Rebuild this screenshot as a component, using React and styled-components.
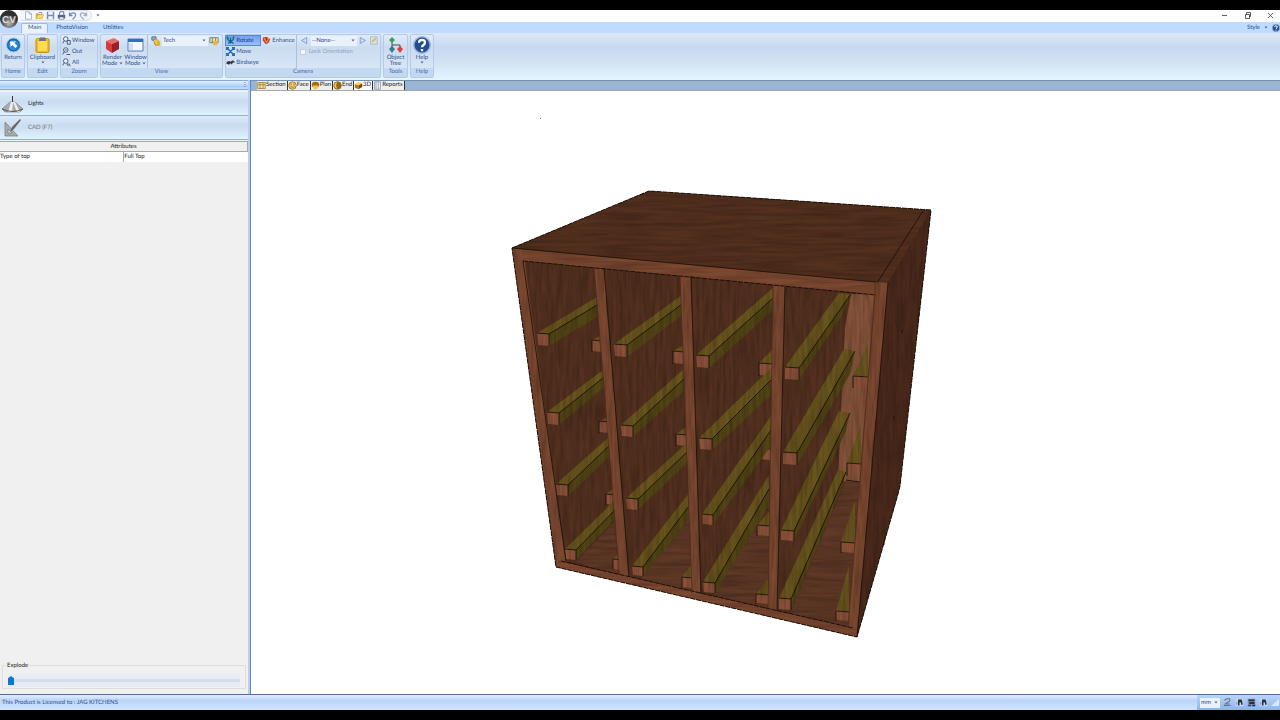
import React, { useState } from "react";
import styled, { createGlobalStyle, css } from "styled-components";

const GlobalStyle = createGlobalStyle`
  * {
    box-sizing: border-box;
  }

  body {
    margin: 0;
    background: #000;
    font-family: Lato, "Open Sans", sans-serif;
    font-size: 6px;
    line-height: 8px;
    color: #2f4f8b;
    text-rendering: geometricPrecision;
  }

  button, select, input {
    font: inherit;
    color: inherit;
    text-rendering: inherit;
  }
`;

const Page = styled.div`
  display: flex;
  flex-direction: column;
  min-height: 100vh;
  padding: 10px 0;
  overflow: hidden;
`;

const TitleBar = styled.header`
  position: relative;
  display: flex;
  align-items: flex-start;
  justify-content: space-between;
  height: 12px;
  padding-left: 20px;
  background: #fff;
`;

const Orb = styled.button`
  position: absolute;
  z-index: 1;
  top: 0;
  left: 0;
  width: 20px;
  height: 20px;
  padding: 0;
  border: 0;
  background: none;

  svg {
    display: block;
  }
`;

const QuickBar = styled.div`
  display: flex;
  align-items: center;
  gap: 1px;
  height: 11px;
  padding: 0 3px;
  border: 1px solid #d5dde9;
  border-left: 0;
  border-radius: 0 6px 6px 0;
  background: #f3f7fc;
`;

const QuickGroup = styled.div`
  display: flex;
  align-items: center;
  gap: 4px;
`;

const IconButton = styled.button`
  display: flex;
  align-items: center;
  justify-content: center;
  min-width: 10px;
  height: 10px;
  padding: 0;
  border: 0;
  background: none;
`;

const WindowButtons = styled.div`
  display: flex;
  gap: 13px;
  padding-right: 5px;
  color: #333;
`;

const TabBar = styled.nav`
  display: flex;
  align-items: flex-end;
  height: 11px;
  padding-left: 21px;
  background: #bfdbff;
`;

const RibbonTab = styled.button`
  height: 10px;
  margin-right: 1px;
  padding: 0 6px 1px;
  border: 1px solid transparent;
  border-bottom: 0;
  border-radius: 2px 2px 0 0;
  background: none;
  line-height: 8px;

  ${(props) =>
    props.$active &&
    css`
      border-color: #9bbbe3;
      background: #e8f1fc;
    `}
`;

const StyleMenu = styled.div`
  display: flex;
  align-items: center;
  gap: 4px;
  height: 11px;
  margin-left: auto;
`;

const Ribbon = styled.div`
  display: flex;
  gap: 2px;
  height: 47px;
  padding: 1px 1px 2px;
  background: linear-gradient(#dce8f8 0, #c8d9ef 14px, #d3e3f4 30px, #e3f5ff 100%);
`;

const Group = styled.section`
  display: flex;
  flex-direction: column;
  width: ${(props) => props.$width}px;
  border: 1px solid #b4cae6;
  border-radius: 2px;
  background: linear-gradient(#e0ebf8, #cbdcf0 30%, #dceafa);
`;

const GroupBody = styled.div`
  display: flex;
  flex: 1;
  justify-content: center;
`;

const GroupName = styled.div`
  height: 9px;
  background: #c3d9f2;
  color: #456da5;
  text-align: center;
`;

const BigButton = styled.button`
  display: flex;
  flex-direction: column;
  align-items: center;
  min-width: 23px;
  padding: 0;
  border: 0;
  background: none;
  line-height: 6px;

  > svg:first-child {
    margin: 1px 0;
  }
`;

const Stack = styled.div`
  display: flex;
  flex-direction: column;
  flex: ${(props) => (props.$grow ? 1 : "none")};
  align-items: flex-start;

  ${(props) =>
    props.$divided &&
    css`
      padding: 0 2px 0 3px;
      border-left: 1px solid #aac2e0;
    `}
`;

const SmallButton = styled.button`
  display: flex;
  align-items: center;
  gap: 1px;
  height: 11px;
  padding: 0 1px;
  border: 0;
  white-space: nowrap;
  background: ${(props) => (props.$active ? "linear-gradient(#6f9ff0, #9dc0fb)" : "none")};
  box-shadow: ${(props) => (props.$active ? "inset 0 0 0 1px #5b86cd" : "none")};
  color: ${(props) => (props.$active ? "#183c85" : "inherit")};
`;

const CameraModes = styled(Stack)`
  align-items: stretch;
  min-width: 36px;
`;

const Row = styled.div`
  display: flex;
  align-items: center;
  gap: 1px;
  height: 11px;
`;

const SelectBox = styled.label`
  display: flex;
  align-items: center;
  width: ${(props) => props.$width}px;
  height: 10px;
  padding-right: 2px;
  background: #e9f1fb;

  select {
    flex: 1;
    min-width: 0;
    height: 10px;
    padding: 0 1px;
    border: 0;
    outline: 0;
    appearance: none;
    background: none;
  }
`;

const CheckLabel = styled.label`
  display: flex;
  align-items: center;
  gap: 3px;
  height: 11px;
  color: #91a3bd;

  input {
    width: 6px;
    height: 6px;
    margin: 0;
    border: 1px solid #c2cfdf;
    appearance: none;
    background: #f5f8fc;
  }
`;

const Main = styled.main`
  display: flex;
  flex: 1;
`;

const SidePanel = styled.aside`
  display: flex;
  flex-direction: column;
  width: 251px;
  border-right: 1px solid #5e86bf;
  box-shadow: inset -2px 0 #b5d0f3;
  padding-right: 2px;
  background: #f0f0f0;
  color: #222;
`;

const PanelHead = styled.div`
  display: flex;
  justify-content: flex-end;
  align-items: center;
  height: 10px;
  padding-right: 2px;
  border: 1px solid #86abd8;
  border-width: 1px 0;
  background: linear-gradient(#e5f3ff, #a9cdfd 70%, #c4deff);
`;

const PanelButtons = styled.div`
  display: flex;
  flex-direction: column;
  padding: 2px 0 1px;
`;

const PanelButton = styled.button`
  display: flex;
  align-items: center;
  gap: 3px;
  height: 24px;
  padding: 0 1px;
  border: 0;
  border-bottom: 1px solid #8fb2cf;
  background: linear-gradient(#dbe9f7, #c9dcf1 45%, #e0f3ff);
  color: ${(props) => (props.disabled ? "#777" : "#222")};
`;

const AttributeTable = styled.table`
  width: 100%;
  border-collapse: collapse;
  table-layout: fixed;

  th {
    height: 10px;
    padding: 0;
    border: 1px solid #a9a9a9;
    border-width: 1px 1px 1px 0;
    font-weight: normal;
  }

  td {
    height: 10px;
    padding: 0;
    background: #fff;
  }

  td + td {
    border-left: 1px solid #aaa;
  }
`;

const Explode = styled.fieldset`
  margin: auto 2px 5px;
  padding: 5px 5px 1px;
  border: 1px solid #dedede;

  legend {
    margin-left: -2px;
    padding: 0 1px;
    line-height: 7px;
  }

  input {
    display: block;
    width: 100%;
    height: 13px;
    margin: 0;
    appearance: none;
    background: linear-gradient(#e7ebf3 5px, #d3dfee 5px 8px, #e7ebf3 8px);
  }

  input::-webkit-slider-thumb {
    width: 6px;
    height: 9px;
    appearance: none;
    background: #0878d1;
    clip-path: polygon(0 25%, 50% 0, 100% 25%, 100% 100%, 0 100%);
  }
`;

const Workspace = styled.section`
  display: flex;
  flex: 1;
  flex-direction: column;
  min-width: 0;
  background: #fff;
`;

const ViewTabs = styled.div`
  display: flex;
  align-items: flex-end;
  height: 11px;
  padding: 0 0 0 6px;
  border-top: 1px solid #7592b5;
  border-bottom: 1px solid #a5a9ad;
  background: #9ab5d1;
`;

const ViewTab = styled.button`
  display: flex;
  align-items: center;
  height: 9px;
  padding: 0 1px 1px 0;
  border: 0;
  border-right: 1px solid #333;
  background: ${(props) => (props.$active ? "#fff" : "#eeeeec")};
  color: #222;
  line-height: 8px;
`;

const Viewport = styled.div`
  flex: 1;
  min-height: 0;

  svg {
    display: block;
    width: 100%;
    height: auto;
  }
`;

const StatusBar = styled.footer`
  display: flex;
  align-items: center;
  height: 16px;
  padding-left: 2px;
  border-top: 1px solid #506f9f;
  background: linear-gradient(#e2efff, #bad5f8 35%, #d0e4ff);
`;

const StatusTools = styled.div`
  display: flex;
  align-items: center;
  gap: 2px;
  align-self: stretch;
  margin-left: auto;
  padding: 0 0 0 3px;
  background: linear-gradient(#b9d5fa, #8db5e7);
`;

const Arrow = () => (
  <svg width="4" height="3" viewBox="0 0 4 3" aria-hidden="true">
    <path d="M.5.5h3L2 2.5z" fill="#4b668f" />
  </svg>
);

const glyphs = {
  new: <path d="M2 1h5l3 3v7H2zM7 1v3h3" fill="#f7fbff" stroke="#8ca2c5" />,
  open: (
    <>
      <path d="M1 10V3h4l1 1h4v6z" fill="#d7a93f" />
      <path d="M1 10l3-5h8l-3 5z" fill="#ffd96c" stroke="#c99b35" strokeWidth=".6" />
      <path d="M5 2h4v2" fill="none" stroke="#5c86bf" />
    </>
  ),
  save: (
    <>
      <path d="M1 1h10v10H1z" fill="#7590b8" />
      <path d="M3 1h6v4H3zM3 7h6v4H3z" fill="#f0f5fb" />
    </>
  ),
  print: (
    <>
      <path d="M3 5l1-4h5v4" fill="#fff" stroke="#334b77" />
      <path d="M1 5h10v5H1z" fill="#546a92" />
      <path d="M3 8h6v3H3z" fill="#fff" stroke="#334b77" strokeWidth=".7" />
    </>
  ),
  undo: <path d="M2 2v4h4M2 6c3-5 9-4 8 0-.5 3-3 4-4 5" fill="none" stroke="#6f89b5" strokeWidth="1.7" />,
  redo: <path d="M10 2v4H6M10 6C7 1 1 2 2 6c.5 3 3 4 5 5" fill="none" stroke="#9aaec9" strokeWidth="1.7" />,
  zoomWindow: (
    <>
      <circle cx="5" cy="4" r="3" fill="#eef5ff" stroke="#3c527b" strokeWidth="1.2" />
      <path d="M3 6L1 10M7 6h4v5H7z" fill="none" stroke="#3c527b" strokeWidth="1.2" />
    </>
  ),
  zoomOut: (
    <>
      <circle cx="5" cy="4" r="3" fill="#eef5ff" stroke="#3c527b" strokeWidth="1.2" />
      <path d="M3 6L1 10M6 10h5M3.5 4h3" stroke="#3c527b" strokeWidth="1.2" />
    </>
  ),
  zoomAll: (
    <>
      <circle cx="5" cy="4" r="3" fill="#eef5ff" stroke="#3c527b" strokeWidth="1.2" />
      <path d="M3 6L1 10M6 8h2v3M9 7l2 4" fill="none" stroke="#3c527b" strokeWidth="1.2" />
    </>
  ),
  tech: (
    <>
      <path d="M1 1h5v4H1z" fill="#8ab1e4" stroke="#42658f" />
      <path d="M3 5l3-2 4 4v4H5z" fill="#f4c642" stroke="#8b6825" strokeWidth=".7" />
      <path d="M7 7h4v4H7z" fill="#e5ad31" />
    </>
  ),
  views: (
    <>
      <path d="M1 2h10v6H1zM4 2v6M8 2v6" fill="#f9e28b" stroke="#5272a5" />
      <path d="M5 6h5v5H5z" fill="#eeb52e" />
    </>
  ),
  rotate: (
    <>
      <path d="M2 2c0 6 8 6 8 1M6 2v8M3 10l3-3 4 3" fill="none" stroke="#126a79" strokeWidth="1.8" />
      <path d="M0 3l2-3 2 3zM8 3l2-3 2 3z" fill="#137982" />
    </>
  ),
  move: <path d="M1 1l10 10M11 1L1 11M1 4V1h3M8 1h3v3M11 8v3H8M4 11H1V8" fill="none" stroke="#2569bd" strokeWidth="1.8" />,
  birdseye: <path d="M0 7q3-5 6-2 4-4 6 1L9 6l-1 3-2-2-2 2z" fill="#303844" />,
  enhance: (
    <>
      <path d="M1 2l5-1 5 3-2 5-4 2-4-5z" fill="#c9462c" />
      <path d="M2 3l4 1 4-1-4 6z" fill="#f7b46c" />
      <circle cx="6" cy="5" r="1.5" fill="#962818" />
    </>
  ),
  prev: <path d="M9 2v8L2 6z" fill="#c9def8" stroke="#6790c9" />,
  next: <path d="M3 2v8l7-4z" fill="#c9def8" stroke="#6790c9" />,
  note: (
    <>
      <path d="M2 1h9v10H2z" fill="#dbe0d4" stroke="#a4b2bd" />
      <path d="M4 8l5-5" stroke="#c2b57b" strokeWidth="2" />
    </>
  ),
  section: <path d="M1 2h10v8H1zM4 2v8M8 2v8M1 5h10" fill="#f5e5a4" stroke="#9b742d" />,
  face: (
    <>
      <circle cx="6" cy="6" r="5" fill="#f5d46c" stroke="#80622d" />
      <path d="M4 3v3M8 3v3M3 8h6" stroke="#80622d" />
    </>
  ),
  plan: (
    <>
      <ellipse cx="6" cy="5" rx="5" ry="4" fill="#a66b18" />
      <path d="M2 6h8l-2 5H4z" fill="#f2c44c" />
    </>
  ),
  end: (
    <>
      <circle cx="6" cy="6" r="5" fill="#f1c04c" stroke="#76531c" />
      <path d="M6 1a5 5 0 010 10L4 6z" fill="#94661d" />
    </>
  ),
  cube: (
    <>
      <path d="M1 4l5-3 5 2-5 3z" fill="#ffd15b" />
      <path d="M1 4l5 2v5L1 9z" fill="#bd7412" />
      <path d="M6 6l5-3v5l-5 3z" fill="#744715" />
    </>
  ),
  reports: <path d="M2 1h8v10H2zM4 1v10M7 1v10" fill="#e8edf2" stroke="#8a98a9" />,
  layers: <path d="M2 3l3-2h4v3L3 8h6M1 10h9" fill="none" stroke="#687588" strokeWidth="1.4" />,
  lamp: (
    <>
      <path d="M1 1h10v10H1z" fill="#c9d8ea" />
      <path d="M4 2h5l1 4v3H8V6H6v4H4z" fill="#283344" />
      <path d="M2 5h1v4H2z" fill="#5e7697" />
    </>
  ),
  grid: (
    <>
      <path d="M1 1h10v10H1z" fill="#7e90a9" />
      <path d="M2 2h8v2H2zM3 5h7v3H3zM2 9h3v2H2zM7 9h4v2H7z" fill="#262f3e" />
    </>
  ),
  help: (
    <>
      <circle cx="6" cy="6" r="5.5" fill="#244d91" stroke="#9cb4da" />
      <path d="M4 4.5C4 2 8 2 8 4.5 8 6 6 6 6 7.5M6 8.7v1.4" fill="none" stroke="#fff" strokeWidth="1.5" />
    </>
  ),
};

function Icon({ name, size = 9 }) {
  return (
    <svg width={size} height={size} viewBox="0 0 12 12" aria-hidden="true">
      {glyphs[name]}
    </svg>
  );
}

const ReturnIcon = () => (
  <svg width="17" height="18" viewBox="0 0 17 18">
    <circle cx="8.5" cy="9" r="7" fill="#1768b5" stroke="#a3c6e7" />
    <circle cx="8.5" cy="9" r="5.3" fill="#2c89d3" />
    <path d="M5 5.5h6L9.4 7l3 3-2 2-3-3L5.5 11z" fill="#fff" />
  </svg>
);

const ClipboardIcon = () => (
  <svg width="17" height="18" viewBox="0 0 17 18">
    <rect x="2" y="2.5" width="13" height="14" rx="1.5" fill="#f5bf18" stroke="#c78c13" />
    <path d="M4 5h9v9l-1 1H4z" fill="#ffdc4b" />
    <path d="M5 4l1-2.5h5L12 4v1H5z" fill="#66758e" />
  </svg>
);

const RenderIcon = () => (
  <svg width="17" height="18" viewBox="0 0 17 18">
    <path d="M2 5l8-3 5 3-7 3z" fill="#e96b68" />
    <path d="M2 5l6 3v9l-6-4z" fill="#d33b3d" />
    <path d="M8 8l7-3v8l-7 4z" fill="#9c1e29" />
  </svg>
);

const WindowIcon = () => (
  <svg width="17" height="18" viewBox="0 0 17 18">
    <path d="M1 3h15v12H1z" fill="#f3f8ff" stroke="#527fb9" />
    <path d="M1 3h15v3H1z" fill="#346ebc" />
    <path d="M2 7h4v7H2z" fill="#cfe0f5" />
  </svg>
);

const TreeIcon = () => (
  <svg width="17" height="18" viewBox="0 0 17 18">
    <path d="M5 5v8M5 9h8v4" fill="none" stroke="#454d57" />
    <path d="M5 1l3 3-3 3-3-3z" fill="#3aa05a" />
    <path d="M5 10l3 3-3 4-3-4z" fill="#367b91" />
    <path d="M13 10l3 3-3 4-3-4z" fill="#e33d3a" />
  </svg>
);

const LightIcon = () => (
  <svg width="24" height="20" viewBox="0 0 24 20">
    <path d="M11.5 2v7" stroke="#333" />
    <path d="M9 8h5l8 7-3 3H4l-3-3z" fill="#aaa" stroke="#777" strokeWidth=".6" />
    <path d="M10 8L7 18h4l1-10 4 10h3L14 8z" fill="#eee" />
    <path d="M1 15q11 5 21 0" fill="none" stroke="#555" />
  </svg>
);

const CadIcon = () => (
  <svg width="24" height="22" viewBox="0 0 24 22">
    <path d="M4 5v14h13zM7 12v4h4z" fill="#aaa" fillRule="evenodd" stroke="#777" strokeWidth=".7" />
    <path d="M19 2L11 10l-2 5 4-3 7-9z" fill="#666" />
  </svg>
);

// near face box, then where the rail ends: x, top, shoulder, bottom
const leftRails = [
  [537, 333, 549, 346, 597, 297, 305, 317],
  [547, 412, 559, 425, 603, 370, 378, 388],
  [556, 484, 568, 496, 609, 437, 446, 457],
  [565, 549, 576, 560, 615, 500, 510, 519],
  [614, 344, 627, 357, 682, 295, 304, 315],
  [621, 425, 633, 437, 685, 368, 378, 390],
  [626, 498, 638, 510, 687, 443, 452, 463],
  [632, 566, 643, 576, 689, 493, 506, 519],
  [696, 355, 709, 368, 773, 288, 298, 310],
  [699, 438, 712, 450, 771, 368, 380, 395],
  [702, 514, 713, 525, 771, 416, 430, 446],
  [703, 582, 715, 593, 769, 475, 489, 506],
];

const longRails = [
  [785, 367, 799, 380, 839, 293, 851, 294, 843, 314],
  [783, 452, 797, 465, 844, 349, 855, 351, 850, 374],
  [781, 530, 794, 541, 839, 411, 850, 413, 846, 431],
  [779, 598, 791, 610, 838, 470, 846, 472, 843, 485],
];

// near face box plus the height that the top recedes
const rightRails = [
  [592, 340, 602, 352, 5],
  [599, 421, 609, 433, 5],
  [606, 494, 615, 505, 7],
  [613, 559, 621, 570, 7],
  [673, 351, 684, 364, 6],
  [676, 434, 687, 446, 8],
  [679, 508, 689, 519, 12],
  [682, 577, 692, 588, 13],
  [759, 363, 772, 376, 13],
  [758, 448, 771, 460, 13],
  [757, 525, 770, 536, 14],
  [756, 594, 769, 604, 16],
  [853, 376, 868, 388, 32],
  [847, 463, 861, 476, 38],
  [841, 542, 855, 553, 42],
  [836, 611, 849, 621, 45],
];

const points = (list) => list.map((point) => point.join(",")).join(" ");

function LeftRail({ rail }) {
  const [x0, y0, x1, y1, fx, top, shoulder, bottom] = rail;

  return (
    <g>
      <polygon className="railTop" points={points([[x0, y0], [fx, top], [fx, shoulder], [x1, y0 + 1]])} />
      <polygon className="railSide" points={points([[x1, y0 + 1], [fx, shoulder], [fx, bottom], [x1, y1]])} />
      <polygon className="railFront" points={points([[x0, y0], [x1, y0 + 1], [x1, y1], [x0 + 1, y1 - 1]])} />
      <path className="edge" d={`M${x0} ${y0}L${x1} ${y0 + 1}V${y1}M${x1} ${y0 + 1}L${fx} ${shoulder}`} />
    </g>
  );
}

function LongRail({ rail }) {
  const [x0, y0, x1, y1, ax, ay, bx, by, cx, cy] = rail;

  return (
    <g>
      <polygon className="railTop" points={points([[x0, y0], [ax, ay], [bx, by], [x1, y0 + 1]])} />
      <polygon className="railSide" points={points([[x1, y0 + 1], [bx, by], [cx, cy], [x1, y1]])} />
      <polygon className="railFront" points={points([[x0, y0], [x1, y0 + 1], [x1, y1], [x0, y1 - 1]])} />
      <path className="edge" d={`M${x0} ${y0}L${x1} ${y0 + 1}V${y1}M${x1} ${y0 + 1}L${bx} ${by}`} />
    </g>
  );
}

function RightRail({ rail }) {
  const [x0, y0, x1, y1, rise] = rail;

  return (
    <g>
      <polygon className="railTop" points={points([[x0, y0], [x1, y0 - rise], [x1, y0 + 1]])} />
      <polygon className="railFront" points={points([[x0, y0], [x1, y0 + 1], [x1, y1], [x0, y1 - 1]])} />
      <path className="edge" d={`M${x0} ${y1}V${y0}L${x1} ${y0 + 1}`} />
    </g>
  );
}

const Drawing = styled.svg`
  .inside { fill: #53301f; }
  .floor { fill: #5f3826; }
  .back { fill: #85533a; }
  .frame { fill: #7c4830; }
  .top { fill: #54301e; }
  .side { fill: #4a291b; }
  .railTop { fill: #68541d; }
  .railSide { fill: #524415; }
  .railFront { fill: #8d523a; }
  .edge { fill: none; stroke: #160e08; stroke-width: 0.8; }
  .dash { fill: none; stroke: #1c0e09; stroke-width: 1; stroke-dasharray: 5 1; }
`;

function Grain({ id, frequency }) {
  return (
    <filter id={id} x="0" y="0" width="100%" height="100%" colorInterpolationFilters="sRGB">
      <feTurbulence type="fractalNoise" baseFrequency={frequency} numOctaves="3" seed="4" />
      <feColorMatrix values=".4 0 0 0 .72 .4 0 0 0 .72 .4 0 0 0 .72 0 0 0 0 1" result="grain" />
      <feComposite in="SourceGraphic" in2="grain" operator="arithmetic" k1="1" k2="0" k3="0" k4="0" />
    </filter>
  );
}

function Cabinet() {
  return (
    <Drawing viewBox="251 91 1029 603" role="img" aria-label="Cabinet in 3D">
      <defs>
        <Grain id="upright" frequency="0.3 0.03" />
        <Grain id="level" frequency="0.02 0.3" />
      </defs>
      <circle cx="540.5" cy="118.5" r=".6" fill="#555" />
      <polygon className="side" points="512,248 649,191 931,210 900,486 898,494 857,637 556,567" />
      <g filter="url(#level)">
        <polygon className="top" points="512,248 649,191 931,210 888,283" />
      </g>
      <g filter="url(#upright)">
        <polygon className="side" points="888,283 931,210 900,486 898,494 857,637" />
        <polygon className="inside" points="518,257 882,290 854,632 560,564" />
        <polygon className="back" points="851,294 877,294 861,485 838,480 845,328" />
      </g>
      <g filter="url(#level)">
        <polygon className="floor" points="576,562 615,521 622,578" />
        <polygon className="floor" points="640,580 689,517 696,598" />
        <polygon className="floor" points="712,598 746,540 771,506 771,614" />
        <polygon className="floor" points="789,616 846,480 860,482 852,632" />
      </g>
      <path className="edge" d="M846 480l14 2" />
      <g filter="url(#upright)">
        {rightRails.map((rail) => (
          <RightRail key={rail.join()} rail={rail} />
        ))}
        {leftRails.map((rail) => (
          <LeftRail key={rail.join()} rail={rail} />
        ))}
        {longRails.map((rail) => (
          <LongRail key={rail.join()} rail={rail} />
        ))}
      </g>
      <g filter="url(#upright)">
        <polygon className="frame" points="594,266 604,267 629,578 620,576" />
        <polygon className="frame" points="680,274 691,275 701,595 692,593" />
        <polygon className="frame" points="773,284 785,285 777,613 768,611" />
        <polygon className="frame" points="512,248 523,249 566,564 556,567" />
        <polygon className="frame" points="875,282 888,283 857,637 848,629" />
      </g>
      <g filter="url(#level)">
        <polygon className="frame" points="521,249 888,283 876,295 523,261" />
        <polygon className="frame" points="559,561 857,629 857,637 556,567" />
      </g>
      <g filter="url(#upright)">
        <polygon className="frame" points="876,283 888,283 887,296 875,296" />
      </g>
      <path className="dash" d="M512 248L649 191L931 210L900 486L898 494L857 637L556 567zM523 261L876 295M561 561L853 628" />
      <path className="edge" d="M512 248L876 282M523 261L566 561M604 268L629 577M691 276L701 594M785 287L777 611M877 283L923 211M888 283L857 637" />
      <path d="M875 283v12M875 295L848 627M594 267L619 575M680 275L692 593M773 286L768 610" fill="none" stroke="#4e2b1d" strokeWidth=".8" />
      <path d="M902 330v3M894 416v4M884 542v3" stroke="#21110c" />
    </Drawing>
  );
}

const views = [
  ["Section", "section"],
  ["Face", "face"],
  ["Plan", "plan"],
  ["End", "end"],
  ["3D", "cube"],
  ["Reports", "reports"],
];

const cameraModes = [
  ["Rotate", "rotate"],
  ["Move", "move"],
  ["Birdseye", "birdseye"],
];

function App() {
  const [view, setView] = useState("3D");
  const [mode, setMode] = useState("Rotate");
  const [explode, setExplode] = useState(0);

  return (
    <>
      <GlobalStyle />
      <Page>
        <TitleBar>
          <Orb aria-label="Application menu">
            <svg width="20" height="20" viewBox="0 0 20 20">
              <defs>
                <radialGradient id="orb" cy="75%">
                  <stop offset="0" stopColor="#b9b9b5" />
                  <stop offset="1" stopColor="#32302f" />
                </radialGradient>
              </defs>
              <circle cx="9" cy="9" r="9" fill="url(#orb)" />
              <text x="9" y="13" textAnchor="middle" fontFamily="Liberation Sans" fontSize="10" fontWeight="bold" fill="#ddd">
                CV
              </text>
            </svg>
          </Orb>
          <QuickGroup>
            <QuickBar>
              {["new", "open", "save", "print", "undo", "redo"].map((name) => (
                <IconButton key={name} aria-label={name}>
                  <Icon name={name} />
                </IconButton>
              ))}
            </QuickBar>
            <Arrow />
          </QuickGroup>
          <WindowButtons>
            <IconButton aria-label="Minimize">
              <svg width="7" height="7"><path d="M1 3.5h5" stroke="#333" strokeWidth=".8" /></svg>
            </IconButton>
            <IconButton aria-label="Restore">
              <svg width="7" height="7"><path d="M1.5 2.5h4v4h-4zM2.5 2.5v-2h4v4h-1" fill="none" stroke="#333" strokeWidth=".8" /></svg>
            </IconButton>
            <IconButton aria-label="Close">
              <svg width="7" height="7"><path d="M1 1l5 5M6 1L1 6" stroke="#333" strokeWidth=".8" /></svg>
            </IconButton>
          </WindowButtons>
        </TitleBar>

        <TabBar>
          <RibbonTab $active>Main</RibbonTab>
          <RibbonTab>PhotoVision</RibbonTab>
          <RibbonTab>Utilities</RibbonTab>
          <StyleMenu>
            Style <Arrow /> <Icon name="help" size={8} />
          </StyleMenu>
        </TabBar>

        <Ribbon>
          <Group $width={24}>
            <GroupBody>
              <BigButton><ReturnIcon />Return</BigButton>
            </GroupBody>
            <GroupName>Home</GroupName>
          </Group>
          <Group $width={31}>
            <GroupBody>
              <BigButton><ClipboardIcon />Clipboard<Arrow /></BigButton>
            </GroupBody>
            <GroupName>Edit</GroupName>
          </Group>
          <Group $width={38}>
            <GroupBody>
              <Stack $grow>
                <SmallButton><Icon name="zoomWindow" />Window</SmallButton>
                <SmallButton><Icon name="zoomOut" />Out</SmallButton>
                <SmallButton><Icon name="zoomAll" />All</SmallButton>
              </Stack>
            </GroupBody>
            <GroupName>Zoom</GroupName>
          </Group>
          <Group $width={123}>
            <GroupBody>
              <BigButton><RenderIcon />Render<span>Mode <Arrow /></span></BigButton>
              <BigButton><WindowIcon />Window<span>Mode <Arrow /></span></BigButton>
              <Stack $grow $divided>
                <Row>
                  <Icon name="tech" size={10} />
                  <SelectBox $width={46}>
                    <select aria-label="View style"><option>Tech</option></select>
                    <Arrow />
                  </SelectBox>
                  <IconButton aria-label="Edit view styles"><Icon name="views" size={10} /></IconButton>
                </Row>
              </Stack>
            </GroupBody>
            <GroupName>View</GroupName>
          </Group>
          <Group $width={156}>
            <GroupBody>
              <CameraModes>
                {cameraModes.map(([label, icon]) => (
                  <SmallButton key={label} $active={mode === label} onClick={() => setMode(label)}>
                    <Icon name={icon} />
                    {label}
                  </SmallButton>
                ))}
              </CameraModes>
              <Stack $grow>
                <SmallButton><Icon name="enhance" />Enhance</SmallButton>
              </Stack>
              <Stack $divided>
                <Row>
                  <IconButton aria-label="Previous camera"><Icon name="prev" /></IconButton>
                  <SelectBox $width={46}>
                    <select aria-label="Camera"><option>--None--</option></select>
                    <Arrow />
                  </SelectBox>
                  <IconButton aria-label="Next camera"><Icon name="next" /></IconButton>
                  <IconButton aria-label="Edit camera"><Icon name="note" /></IconButton>
                </Row>
                <CheckLabel>
                  <input type="checkbox" disabled />
                  Lock Orientation
                </CheckLabel>
              </Stack>
            </GroupBody>
            <GroupName>Camera</GroupName>
          </Group>
          <Group $width={25}>
            <GroupBody>
              <BigButton><TreeIcon /><span>Object<br />Tree</span></BigButton>
            </GroupBody>
            <GroupName>Tools</GroupName>
          </Group>
          <Group $width={24}>
            <GroupBody>
              <BigButton><Icon name="help" size={18} />Help<Arrow /></BigButton>
            </GroupBody>
            <GroupName>Help</GroupName>
          </Group>
        </Ribbon>

        <Main>
          <SidePanel>
            <PanelHead>
              <svg width="2" height="6"><path d="M1 0v6" stroke="#6387b7" strokeDasharray="1 1" /></svg>
            </PanelHead>
            <PanelButtons>
              <PanelButton><LightIcon />Lights</PanelButton>
              <PanelButton disabled><CadIcon />CAD (F7)</PanelButton>
            </PanelButtons>
            <AttributeTable>
              <thead>
                <tr><th colSpan="2">Attributes</th></tr>
              </thead>
              <tbody>
                <tr><td>Type of top</td><td>Full Top</td></tr>
              </tbody>
            </AttributeTable>
            <Explode>
              <legend>Explode</legend>
              <input
                type="range"
                aria-label="Explode"
                value={explode}
                onChange={(e) => setExplode(Number(e.target.value))}
              />
            </Explode>
          </SidePanel>

          <Workspace>
            <ViewTabs>
              {views.map(([label, icon]) => (
                <ViewTab key={label} $active={view === label} onClick={() => setView(label)}>
                  <Icon name={icon} />
                  {label}
                </ViewTab>
              ))}
            </ViewTabs>
            <Viewport>
              <Cabinet />
            </Viewport>
          </Workspace>
        </Main>

        <StatusBar>
          This Product is Licensed to : JAG KITCHENS
          <StatusTools>
            <SelectBox $width={20}>
              <select aria-label="Units"><option>mm</option></select>
              <Arrow />
            </SelectBox>
            {["layers", "lamp", "grid", "lamp"].map((name, index) => (
              <IconButton key={index} aria-label={`${name} ${index + 1}`}>
                <Icon name={name} />
              </IconButton>
            ))}
            <svg width="10" height="10"><path d="M1 8L9 1v7z" fill="#dce8f7" /></svg>
          </StatusTools>
        </StatusBar>
      </Page>
    </>
  );
}

export default App;
